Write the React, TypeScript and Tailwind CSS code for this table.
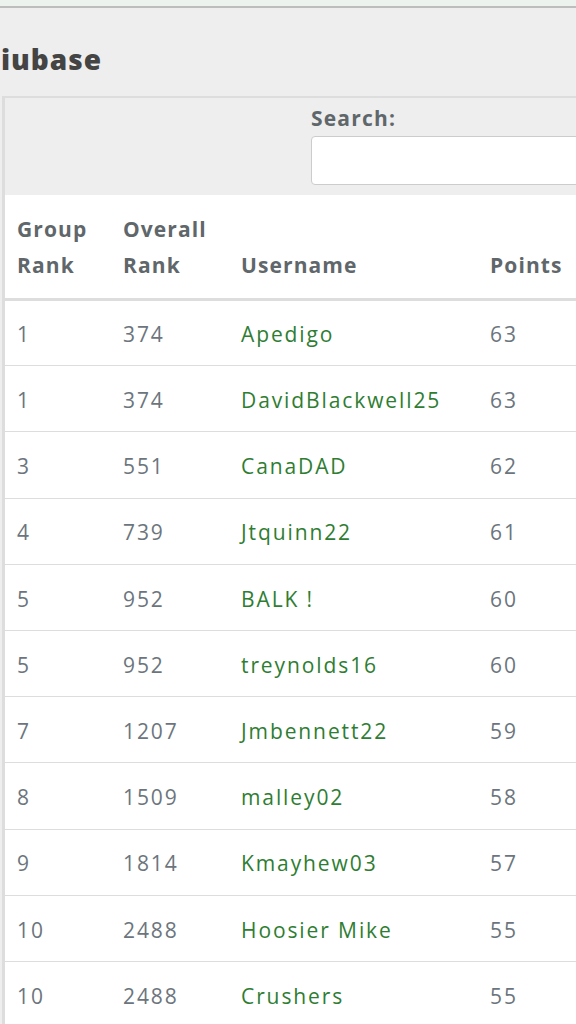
import React from 'react'

const rows = [
  { group: '1', overall: '374', name: 'Apedigo', points: '63' },
  { group: '1', overall: '374', name: 'DavidBlackwell25', points: '63' },
  { group: '3', overall: '551', name: 'CanaDAD', points: '62' },
  { group: '4', overall: '739', name: 'Jtquinn22', points: '61' },
  { group: '5', overall: '952', name: 'BALK !', points: '60' },
  { group: '5', overall: '952', name: 'treynolds16', points: '60' },
  { group: '7', overall: '1207', name: 'Jmbennett22', points: '59' },
  { group: '8', overall: '1509', name: 'malley02', points: '58' },
  { group: '9', overall: '1814', name: 'Kmayhew03', points: '57' },
  { group: '10', overall: '2488', name: 'Hoosier Mike', points: '55' },
  { group: '10', overall: '2488', name: 'Crushers', points: '55' },
]

export default function App() {
  return (
    <div
      className="w-[576px] h-[1024px] overflow-hidden bg-[#eeeeee]"
      style={{ fontFamily: '"Open Sans", "Liberation Sans", sans-serif' }}
    >
      {/* top strip */}
      <div className="h-[8px] bg-[#eef2ee] border-b-2 border-[#bdbdbd]" />

      <h2 className="pl-[1px] pt-[33px] pb-[19px] text-[28px] leading-[36px] font-extrabold tracking-[1px] text-[#444444]">
        iubase
      </h2>

      {/* panel */}
      <div className="ml-[2px] w-[700px] border-l-[3px] border-t-2 border-[#dddddd]">
        <div className="flex h-[97px]">
          <div className="w-[306px] shrink-0" />
          <div className="flex flex-col shrink-0 pt-[6px]">
            <label className="text-[21px] leading-[28px] font-bold tracking-[1.2px] text-[#5f676b]">Search:</label>
            <div className="mt-[4px] w-[400px] h-[49px] bg-white border border-[#cccccc] rounded-[4px]" />
          </div>
        </div>

        <table className="w-[700px] bg-white table-fixed border-collapse text-[21px]">
          <colgroup>
            <col className="w-[106px]" />
            <col className="w-[118px]" />
            <col className="w-[249px]" />
            <col />
          </colgroup>
          <thead>
            <tr className="border-b-[3px] border-[#dddddd] text-left text-[#5f676b] font-bold tracking-[1.1px] leading-[36px]">
              <th className="pl-[12px] pt-[16px] pb-[15px] align-bottom">Group<br />Rank</th>
              <th className="pl-[12px] pt-[16px] pb-[15px] align-bottom">Overall<br />Rank</th>
              <th className="pl-[12px] pb-[15px] align-bottom">Username</th>
              <th className="pl-[12px] pb-[15px] align-bottom">Points</th>
            </tr>
          </thead>
          <tbody>
            {rows.map((r, i) => (
              <tr key={i} className="h-[66.2px] border-b border-[#dddddd] text-[#6c757d] tracking-[1.9px]">
                <td className="pl-[12px] pt-[4px]">{r.group}</td>
                <td className="pl-[12px] pt-[4px]">{r.overall}</td>
                <td className="pl-[12px] pt-[4px] text-[#2e7d32]">{r.name}</td>
                <td className="pl-[12px] pt-[4px]">{r.points}</td>
              </tr>
            ))}
          </tbody>
        </table>
      </div>
    </div>
  )
}
